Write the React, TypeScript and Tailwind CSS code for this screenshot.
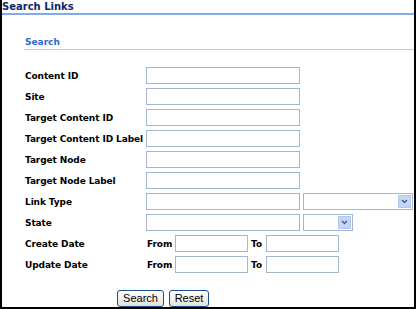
import React from "react";

const font = { fontFamily: '"DejaVu Sans", Verdana, sans-serif' };

function TextInput({ w = "w-[154px]" }: { w?: string }) {
  return <div className={`${w} h-[17px] border border-[#a3b7cf] bg-white shrink-0`} />;
}

function Select({ w }: { w: string }) {
  return (
    <div className={`${w} h-[17px] border border-[#a3b7cf] bg-white shrink-0 flex justify-end items-stretch p-[1px]`}>
      <div className="w-[13px] bg-[#c6d6fb] border border-[#b3c6ee] flex items-center justify-center">
        <svg width="7" height="5" viewBox="0 0 7 5">
          <path d="M1 1 L3.5 3.5 L6 1" stroke="#4d6185" strokeWidth="1.5" fill="none" />
        </svg>
      </div>
    </div>
  );
}

function Row({ label, children }: { label: string; children?: React.ReactNode }) {
  return (
    <div className="flex items-center h-[21px]">
      <div className="w-[121px] shrink-0 text-[9px] font-bold text-black leading-[12px] tracking-[-0.1px]">{label}</div>
      <div className="flex items-center">{children}</div>
    </div>
  );
}

function DateRow({ label }: { label: string }) {
  return (
    <Row label={label}>
      <span className="ml-[1px] w-[28px] text-[9px] font-bold leading-[12px] tracking-[-0.1px]">From</span>
      <TextInput w="w-[73px]" />
      <span className="ml-[3px] w-[15px] text-[9px] font-bold leading-[12px]">To</span>
      <TextInput w="w-[73px]" />
    </Row>
  );
}

function XPButton({ label, w }: { label: string; w: string }) {
  return (
    <button
      className={`${w} h-[17px] rounded-[3px] border border-[#1c4f8a] bg-gradient-to-b from-white to-[#e4e2d6] text-[11px] leading-[13px] text-black flex items-center justify-center`}
      style={{ fontFamily: '"Liberation Sans", Arial, sans-serif' }}
    >
      {label}
    </button>
  );
}

export default function App() {
  return (
    <div className="w-[416px] h-[309px] bg-white border-x-2 border-b-2 border-black overflow-hidden" style={font}>
      <div className="h-[15px] border-b-2 border-[#82abea] text-[10px] font-bold text-[#0b2766] leading-[13px]">
        Search Links
      </div>
      <div className="pl-[22px]">
        <div className="pt-[21px] h-[35px] border-b border-[#c8c8c8] pl-[1px] text-[9px] font-bold text-[#2a6bd0] leading-[12px]">
          Search
        </div>
      </div>
      <div className="pl-[23px] mt-[15px]">
        <Row label="Content ID"><TextInput /></Row>
        <Row label="Site"><TextInput /></Row>
        <Row label="Target Content ID"><TextInput /></Row>
        <Row label="Target Content ID Label"><TextInput /></Row>
        <Row label="Target Node"><TextInput /></Row>
        <Row label="Target Node Label"><TextInput /></Row>
        <Row label="Link Type">
          <TextInput />
          <div className="ml-[3px]"><Select w="w-[110px]" /></div>
        </Row>
        <Row label="State">
          <TextInput />
          <div className="ml-[3px]"><Select w="w-[50px]" /></div>
        </Row>
        <DateRow label="Create Date" />
        <DateRow label="Update Date" />
      </div>
      <div className="flex gap-[5px] pl-[115px] mt-[15px]">
        <XPButton label="Search" w="w-[47px]" />
        <XPButton label="Reset" w="w-[40px]" />
      </div>
    </div>
  );
}
